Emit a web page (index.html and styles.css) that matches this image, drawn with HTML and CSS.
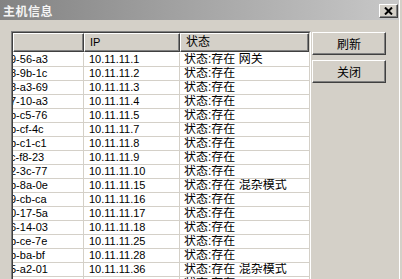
FILE: index.html
```html
<!DOCTYPE html>
<html lang="zh-CN">
<head>
    <meta charset="UTF-8">
    <title>主机信息</title>
    <link rel="stylesheet" href="styles.css">
</head>
<body>
    <div class="window">
        <div class="titlebar">
            <span class="title">主机信息</span>
            <button class="close-btn">
                <svg width="9" height="8" viewBox="0 0 9 8">
                    <path d="M1 0.5l7 7M8 0.5l-7 7" stroke="#000" stroke-width="2" fill="none"></path>
                </svg>
            </button>
        </div>

        <div class="content">
            <!-- host list (scrolled right, first column clipped) -->
            <div class="list">
                <div class="list-inner">
                    <div class="list-head">
                        <div class="head-cell col-mac"></div>
                        <div class="head-cell col-ip">IP</div>
                        <div class="head-cell col-state">状态</div>
                    </div>
                    <div class="row"><div class="cell col-mac">9-56-a3</div><div class="cell col-ip">10.11.11.1</div><div class="cell col-state">状态:存在 网关</div></div>
                    <div class="row"><div class="cell col-mac">8-9b-1c</div><div class="cell col-ip">10.11.11.2</div><div class="cell col-state">状态:存在</div></div>
                    <div class="row"><div class="cell col-mac">8-a3-69</div><div class="cell col-ip">10.11.11.3</div><div class="cell col-state">状态:存在</div></div>
                    <div class="row"><div class="cell col-mac">7-10-a3</div><div class="cell col-ip">10.11.11.4</div><div class="cell col-state">状态:存在</div></div>
                    <div class="row"><div class="cell col-mac">b-c5-76</div><div class="cell col-ip">10.11.11.5</div><div class="cell col-state">状态:存在</div></div>
                    <div class="row"><div class="cell col-mac">b-cf-4c</div><div class="cell col-ip">10.11.11.7</div><div class="cell col-state">状态:存在</div></div>
                    <div class="row"><div class="cell col-mac">b-c1-c1</div><div class="cell col-ip">10.11.11.8</div><div class="cell col-state">状态:存在</div></div>
                    <div class="row"><div class="cell col-mac">c-f8-23</div><div class="cell col-ip">10.11.11.9</div><div class="cell col-state">状态:存在</div></div>
                    <div class="row"><div class="cell col-mac">2-3c-77</div><div class="cell col-ip">10.11.11.10</div><div class="cell col-state">状态:存在</div></div>
                    <div class="row"><div class="cell col-mac">b-8a-0e</div><div class="cell col-ip">10.11.11.15</div><div class="cell col-state">状态:存在 混杂模式</div></div>
                    <div class="row"><div class="cell col-mac">9-cb-ca</div><div class="cell col-ip">10.11.11.16</div><div class="cell col-state">状态:存在</div></div>
                    <div class="row"><div class="cell col-mac">0-17-5a</div><div class="cell col-ip">10.11.11.17</div><div class="cell col-state">状态:存在</div></div>
                    <div class="row"><div class="cell col-mac">6-14-03</div><div class="cell col-ip">10.11.11.18</div><div class="cell col-state">状态:存在</div></div>
                    <div class="row"><div class="cell col-mac">b-ce-7e</div><div class="cell col-ip">10.11.11.25</div><div class="cell col-state">状态:存在</div></div>
                    <div class="row"><div class="cell col-mac">b-ba-bf</div><div class="cell col-ip">10.11.11.28</div><div class="cell col-state">状态:存在</div></div>
                    <div class="row"><div class="cell col-mac">5-a2-01</div><div class="cell col-ip">10.11.11.36</div><div class="cell col-state">状态:存在 混杂模式</div></div>
                    <div class="row"><div class="cell col-mac"></div><div class="cell col-ip"></div><div class="cell col-state">状态:存在</div></div>
                </div>
            </div>

            <div class="actions">
                <button class="btn">刷新</button>
                <button class="btn">关闭</button>
            </div>
        </div>
    </div>
</body>
</html>
```

FILE: styles.css
```css
* {
  box-sizing: border-box;
}

html, body {
  margin: 0;
  padding: 0;
}

body {
  width: 402px;
  height: 279px;
  overflow: hidden;
  background: #d4d0c8;
  font-family: "Liberation Sans", "Noto Sans CJK SC", sans-serif;
  font-size: 11px;
  color: #000;
}

.window {
  display: flex;
  flex-direction: column;
  width: 400px;
  height: 100%;
  border-right: 1px solid #fff;
}

/* inactive caption */
.titlebar {
  height: 20px;
  display: flex;
  align-items: center;
  justify-content: space-between;
  padding: 0 1px 0 3px;
  background: linear-gradient(to right, #838383, #c8c8c8);
}

.title {
  color: #f4f4f4;
  font-size: 12px;
  font-weight: bold;
  letter-spacing: 0.5px;
}

.close-btn {
  width: 19px;
  height: 14px;
  margin-top: 1px;
  padding: 0;
  display: flex;
  justify-content: center;
  align-items: center;
  background: #d4d0c8;
  border: 1px solid;
  border-color: #fff #404040 #404040 #fff;
  box-shadow: inset -1px -1px #808080;
}

.close-btn svg {
  display: block;
}

.content {
  flex: 1;
  min-height: 0;
  display: flex;
  align-items: flex-start;
  gap: 1px;
  padding: 11px 0 0 11px;
  overflow: hidden;
}

/* sunken list view */
.list {
  width: 300px;
  flex-shrink: 0;
  border: 1px solid;
  border-color: #808080 #fff #fff #808080;
}

.list-inner {
  border: 1px solid;
  border-color: #404040 #d4d0c8 #d4d0c8 #404040;
  background: #fff;
}

.list-head {
  display: flex;
  height: 19px;
}

.head-cell {
  height: 19px;
  line-height: 16px;
  padding-left: 5px;
  background: #d4d0c8;
  border: 1px solid;
  border-color: #fff #404040 #404040 #fff;
  box-shadow: inset -1px -1px #808080;
  white-space: nowrap;
  overflow: hidden;
}

.row {
  display: flex;
  height: 14px;
  border-bottom: 1px solid #d4d0c8;
}

.list-head + .row {
  height: 15px;
  padding-top: 1px;
}

.cell {
  line-height: 13px;
  padding-left: 5px;
  border-right: 1px solid #d4d0c8;
  white-space: nowrap;
  overflow: hidden;
}

.col-mac {
  width: 71px;
}

.cell.col-mac {
  padding-left: 0;
  text-indent: -3px;
}

.col-ip {
  width: 96px;
}

.col-state {
  width: 129px;
  font-size: 12px;
}

.cell.col-state {
  padding-left: 4px;
  border-right: none;
}

.actions {
  display: flex;
  flex-direction: column;
  gap: 5px;
  padding-top: 1px;
}

.btn {
  width: 74px;
  height: 23px;
  padding: 0;
  font-family: "Liberation Sans", "Noto Sans CJK SC", sans-serif;
  font-size: 12px;
  color: #000;
  background: #d4d0c8;
  border: 1px solid;
  border-color: #fff #404040 #404040 #fff;
  box-shadow: inset -1px -1px #808080;
}
```
